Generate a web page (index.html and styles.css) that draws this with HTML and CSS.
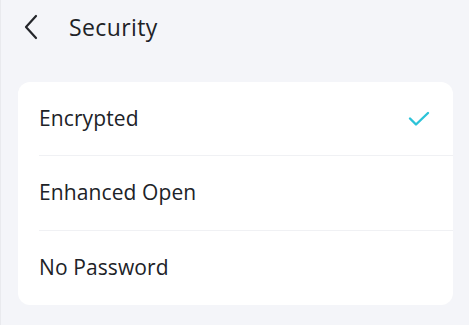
FILE: index.html
```html
<!DOCTYPE html>
<html>
<head>
<meta charset="utf-8">
<link rel="stylesheet" href="styles.css">
</head>
<body>
<div class="page">
  <header class="topbar">
    <svg class="back" width="16" height="26" viewBox="0 0 16 26"><path d="M13 2 L3 13 L13 24" fill="none" stroke="#23252a" stroke-width="2.2" stroke-linecap="round" stroke-linejoin="round"/></svg>
    <h1 class="title">Security</h1>
  </header>
  <ul class="card">
    <li class="row"><span class="label">Encrypted</span>
      <svg class="check" width="22" height="16" viewBox="0 0 22 16"><path d="M2 7.5 L8 13.5 L20 2" fill="none" stroke="#2cc3d8" stroke-width="2.4" stroke-linecap="round" stroke-linejoin="round"/></svg>
    </li>
    <li class="row"><span class="label">Enhanced Open</span></li>
    <li class="row"><span class="label">No Password</span></li>
  </ul>
</div>
</body>
</html>
```

FILE: styles.css
```css
html, body {
  margin: 0;
  padding: 0;
  background: #f4f5f9;
  font-family: "Open Sans", "Noto Sans", sans-serif;
  color: #202227;
}
.page {
  width: 469px;
  height: 325px;
  box-sizing: border-box;
  border-left: 1px solid #e9eaee;
}
.topbar {
  display: flex;
  align-items: center;
  height: 54px;
  padding-left: 22px;
}
.back {
  display: block;
}
.title {
  margin: 0 0 0 30px;
  font-size: 23px;
  font-weight: 400;
  letter-spacing: 0.4px;
}
.card {
  list-style: none;
  margin: 28px 16px 0 17px;
  padding: 0 0 0 21px;
  background: #ffffff;
  border-radius: 12px;
}
.row {
  display: flex;
  align-items: center;
  justify-content: space-between;
  height: 73px;
  padding-right: 23px;
  border-bottom: 1px solid #f0f1f4;
}
.row:nth-child(2) {
  height: 74px;
}
.row:last-child {
  height: 74px;
  border-bottom: none;
}
.label {
  font-size: 21px;
  letter-spacing: 0.1px;
  position: relative;
  top: -1px;
}
.check {
  display: block;
}
```
